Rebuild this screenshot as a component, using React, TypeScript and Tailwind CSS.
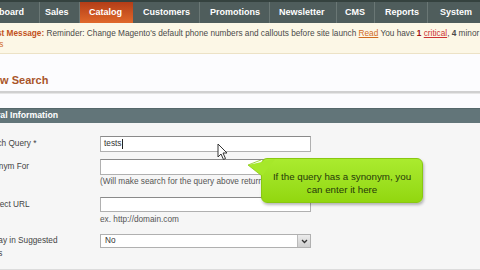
import React from "react";

const navItems = [
  { t: "Dashboard", w: "w-[40px] justify-end pr-[15px]", active: false },
  { t: "Sales", w: "w-[40px] pl-[5px]", active: false },
  { t: "Catalog", w: "w-[53px] pl-[9px]", active: true },
  { t: "Customers", w: "w-[67px] pl-[10px]", active: false },
  { t: "Promotions", w: "w-[70px] pl-[10px]", active: false },
  { t: "Newsletter", w: "w-[67px] pl-[9px]", active: false },
  { t: "CMS", w: "w-[38px] pl-[8px]", active: false },
  { t: "Reports", w: "w-[53px] pl-[10px]", active: false },
  { t: "System", w: "w-[60px] pl-[12px]", active: false },
];

function Cursor() {
  return (
    <svg className="absolute left-[217px] top-[143px]" width="12" height="18" viewBox="0 0 12 18">
      <path d="M1 1 L1 14 L4 11 L6.5 16.5 L8.5 15.5 L6 10 L10 10 Z" fill="#fff" stroke="#333" strokeWidth="1" strokeLinejoin="round" />
    </svg>
  );
}

export default function App() {
  return (
    <div className="relative w-[480px] h-[270px] overflow-hidden bg-[#f6f6f6] font-['Liberation_Sans',Arial,sans-serif]">
      {/* Nav */}
      <div className="flex h-[23px] bg-[#4f5d5c] border-t-2 border-[#35423f] whitespace-nowrap">
        {navItems.map((n) => (
          <div
            key={n.t}
            className={`flex shrink-0 items-center overflow-hidden text-[9px] font-bold text-white ${n.w} ${
              n.active
                ? "bg-gradient-to-b from-[#b33d18] to-[#e0682a]"
                : "border-r border-[#6a7775]"
            }`}
          >
            <span className="shrink-0">{n.t}</span>
          </div>
        ))}
      </div>

      <div className="-ml-[30px] w-[540px]">
        {/* Notice */}
        <div className="h-[31px] bg-[#fcf7e6] border-b border-[#ece2c6] px-[10px] pt-[5px] text-[8.25px] leading-[11px] text-[#4a4a4a] whitespace-nowrap">
          <div>
            <b className="text-[#c2521c]">Latest Message:</b> Reminder: Change Magento's default phone numbers and callouts before site launch{" "}
            <span className="text-[#d06a1e] underline">Read</span> You have <b className="text-[#a01010]">1</b>{" "}
            <span className="text-[#c33] underline">critical</span>, <b>4</b> minor and 12 notice unread message(s).
          </div>
          <div>
            <span className="text-[#d06a1e]">issues</span>
          </div>
        </div>

        {/* Heading */}
        <div className="bg-[#fcfcfe] pt-[18px]">
          <div className="pl-[16px] text-[11px] leading-[16px] font-bold text-[#a9552a]">New Search</div>
          <div className="mt-[3px] h-[2px] bg-[#d0d0d0]" />
          <div className="h-px bg-[#e6e6e6]" />
          <div className="h-[14px]" />
        </div>

        {/* Section header */}
        <div className="h-[15px] bg-[#627579] border-t border-[#56686b] flex items-center pl-[5px] text-[8.75px] font-bold text-white">
          General Information
        </div>

        {/* Form */}
        <div className="pt-[13px] text-[8.25px] text-[#444] border-b border-[#dcdcdc] pb-[9px]">
          <div className="flex">
            <div className="w-[130px] pl-[10px] leading-[14px] pt-[1px]">Search Query *</div>
            <div className="h-[16px] w-[211px] bg-white border border-[#b0b0b0] border-t-[#8a8a8a] flex items-center px-[3px] text-[#333]">
              tests<span className="ml-px h-[10px] w-px bg-[#222]" />
            </div>
          </div>

          <div className="flex mt-[7px]">
            <div className="w-[130px] pl-[10px] leading-[14px] pt-[1px]">Synonym For</div>
            <div>
              <div className="h-[16px] w-[211px] bg-white border border-[#b0b0b0] border-t-[#8a8a8a]" />
              <div className="mt-[1px] leading-[11px] text-[#555] whitespace-nowrap">
                (Will make search for the query above return results for this search.)
              </div>
            </div>
          </div>

          <div className="flex mt-[10px]">
            <div className="w-[130px] pl-[10px] leading-[14px] pt-[1px]">Redirect URL</div>
            <div>
              <div className="h-[15px] w-[211px] bg-white border border-[#b0b0b0] border-t-[#8a8a8a]" />
              <div className="mt-[2px] leading-[11px] text-[#555]">ex. http://domain.com</div>
            </div>
          </div>

          <div className="flex mt-[9px]">
            <div className="w-[130px] pl-[10px] leading-[13px]">
              Display in Suggested
              <br />
              Terms
            </div>
            <div className="h-[14px] w-[211px] bg-white border border-[#b0b0b0] flex items-center justify-between pl-[4px]">
              <span className="text-[#333]">No</span>
              <div className="h-[12px] w-[13px] bg-gradient-to-b from-[#ececec] to-[#cfcfcf] border-l border-[#bbb] flex items-center justify-center">
                <svg width="7" height="5" viewBox="0 0 7 5">
                  <path d="M1 1 L3.5 3.5 L6 1" fill="none" stroke="#333" strokeWidth="1.3" />
                </svg>
              </div>
            </div>
          </div>
        </div>
      </div>

      {/* Tooltip */}
      <div className="absolute left-[261px] top-[158px] w-[162px] h-[45px] rounded-[6px] bg-gradient-to-b from-[#aaeb2e] to-[#92d70e] border border-[#89c811] shadow-[1px_2px_3px_rgba(0,0,0,0.28)] flex flex-col items-center justify-center pt-[5px] text-[9.75px] leading-[13px] text-[#263a0a]">
        <div>If the query has a synonym, you</div>
        <div>can enter it here</div>
      </div>
      <svg className="absolute left-[246px] top-[157px]" width="32" height="22" viewBox="0 0 32 22">
        <path d="M2 8 L29 2 L16 19 Z" fill="#a6e82a" />
        <path d="M16 19 L2 8 L15 3" fill="none" stroke="#89c811" strokeWidth="0.8" />
      </svg>

      <Cursor />
    </div>
  );
}
